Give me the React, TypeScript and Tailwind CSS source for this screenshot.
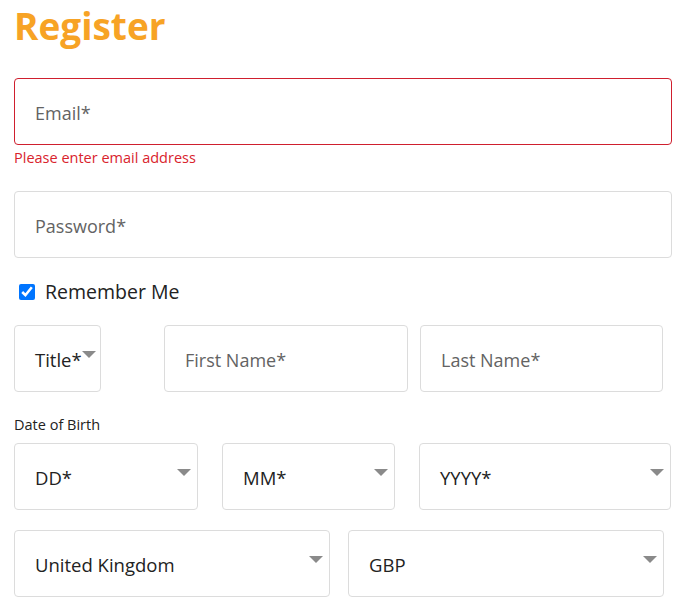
import React from "react";

const font = { fontFamily: '"Open Sans", "Noto Sans", Arial, sans-serif' };

function Caret() {
  return (
    <svg width="14" height="7" viewBox="0 0 14 7" className="shrink-0 mb-[8px]">
      <polygon points="0,0 14,0 7,7" fill="#8a8a8a" />
    </svg>
  );
}

function TextField({ placeholder, className = "", error = false }: { placeholder: string; className?: string; error?: boolean }) {
  return (
    <input
      type="text"
      placeholder={placeholder}
      className={`h-[67px] rounded-[4px] border bg-white pl-[20px] pr-3 pt-[2px] text-[18px] text-[#222] outline-none placeholder:text-[#636363] ${
        error ? "border-[#cf1f2e]" : "border-[#dcdcdc]"
      } ${className}`}
      style={font}
    />
  );
}

function SelectBox({ value, className = "" }: { value: string; className?: string }) {
  return (
    <div
      className={`flex h-[67px] items-center justify-between rounded-[4px] border border-[#dcdcdc] bg-white pl-[20px] pr-[6px] ${className}`}
    >
      <span className="mt-[2px] whitespace-nowrap text-[18.5px] text-[#222]">{value}</span>
      <Caret />
    </div>
  );
}

export default function App() {
  return (
    <div className="min-h-[610px] w-[680px] bg-white pl-[14px]" style={font}>
      <div className="flex w-[658px] flex-col">
        <h1 className="mt-[7px] text-[37px] font-bold leading-[38px] text-[#f7a325]">Register</h1>

        <TextField placeholder="Email*" error className="mt-[33px] w-[658px]" />
        <p className="mt-[3px] text-[14.5px] leading-[20px] text-[#d9232d]">Please enter email address</p>

        <TextField placeholder="Password*" className="mt-[23px] w-[658px]" />

        <label className="mt-[22px] flex h-[24px] items-center">
          <input type="checkbox" defaultChecked className="ml-[5px] h-4 w-4 accent-[#0075ff]" />
          <span className="ml-[10px] text-[19.5px] text-[#222]">Remember Me</span>
        </label>

        <div className="mt-[21px] flex">
          <SelectBox value="Title*" className="w-[87px]" />
          <TextField placeholder="First Name*" className="ml-[63px] w-[244px]" />
          <TextField placeholder="Last Name*" className="ml-[12px] w-[243px]" />
        </div>

        <p className="mt-[23px] text-[14.5px] leading-[20px] text-[#222]">Date of Birth</p>

        <div className="mt-[8px] flex">
          <SelectBox value="DD*" className="w-[184px]" />
          <SelectBox value="MM*" className="ml-[24px] w-[173px]" />
          <SelectBox value="YYYY*" className="ml-[24px] w-[252px]" />
        </div>

        <div className="mt-[20px] flex">
          <SelectBox value="United Kingdom" className="w-[316px]" />
          <SelectBox value="GBP" className="ml-[18px] w-[316px]" />
        </div>
      </div>
    </div>
  );
}
